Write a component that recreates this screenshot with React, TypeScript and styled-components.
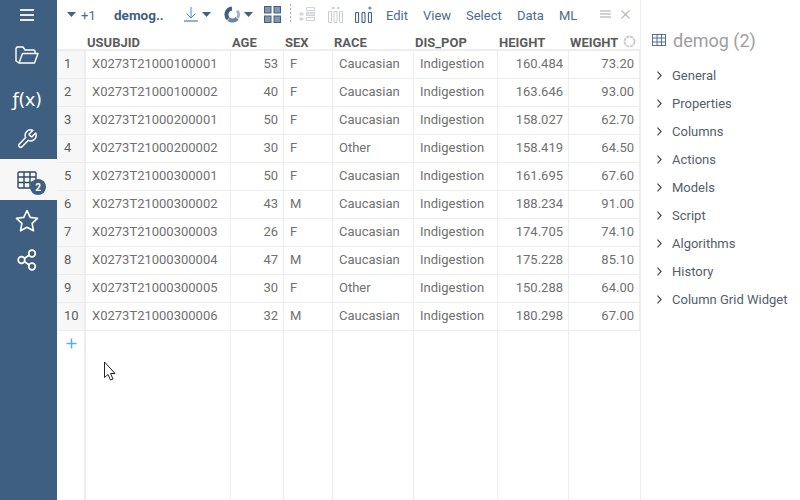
import React from 'react';
import styled, { createGlobalStyle } from 'styled-components';

const GlobalStyle = createGlobalStyle`
  html, body {
    margin: 0;
    padding: 0;
    background: #fff;
  }
  body {
    font-family: Roboto, "Liberation Sans", sans-serif;
  }
`;

const COLUMNS = '29px 145px 53px 49px 81px 84px 71px 71px';

const Page = styled.div`
  display: flex;
  width: 800px;
  height: 500px;
  overflow: hidden;
  position: relative;
`;

const Sidebar = styled.nav`
  width: 57px;
  flex: none;
  background: #3e5f80;
  display: flex;
  flex-direction: column;
`;

const SideItem = styled.div<{ $active?: boolean; $height?: number }>`
  height: ${(p) => p.$height ?? 40}px;
  display: flex;
  align-items: center;
  justify-content: center;
  padding-right: 3px;
  box-sizing: border-box;
  position: relative;
  color: ${(p) => (p.$active ? '#3e5f80' : '#fff')};
  background: ${(p) => (p.$active ? '#f7f7f7' : 'transparent')};
`;

const Badge = styled.span`
  position: absolute;
  left: 30px;
  top: 20px;
  width: 16px;
  height: 16px;
  border-radius: 50%;
  background: #3e5f80;
  color: #fff;
  font-size: 10px;
  font-weight: 700;
  display: flex;
  align-items: center;
  justify-content: center;
`;

const Fx = styled.span`
  font-family: "DejaVu Sans", sans-serif;
  font-size: 18px;
  letter-spacing: -0.5px;
  color: #fff;
`;

const Main = styled.main`
  width: 583px;
  flex: none;
  display: flex;
  flex-direction: column;
`;

const Toolbar = styled.div`
  height: 30px;
  position: relative;
  white-space: nowrap;
`;

const Tool = styled.span<{ $left: number; $bold?: boolean; $icon?: boolean }>`
  position: absolute;
  left: ${(p) => p.$left - 57}px;
  top: 0;
  height: ${(p) => (p.$icon ? 28 : 30)}px;
  display: flex;
  align-items: center;
  font-weight: ${(p) => (p.$bold ? 700 : 400)};
  font-size: ${(p) => (p.$bold ? '13.5px' : '13px')};
  color: ${(p) => (p.$bold ? '#40607f' : '#4b6c8c')};
`;

const Grid = styled.div`
  flex: 1;
  display: flex;
  flex-direction: column;
  min-height: 0;
`;

const Row = styled.div<{ $height?: number }>`
  display: grid;
  grid-template-columns: ${COLUMNS};
  height: ${(p) => p.$height ?? 28}px;
  flex: none;
`;

const HeadCell = styled.div`
  height: 21px;
  line-height: 25px;
  padding-left: 1px;
  font-size: 13px;
  font-weight: 700;
  color: #5c5c5c;
  border-bottom: 2px solid #ededed;
  box-sizing: border-box;
  position: relative;
  white-space: nowrap;
`;

const SortIcon = styled.svg`
  position: absolute;
  right: 4px;
  top: 5px;
`;

const IndexCell = styled.div`
  background: #f7f7f7;
  border-right: 2px solid #ededed;
  border-bottom: 1px solid #ededed;
  box-sizing: border-box;
  color: #5c5c5c;
  font-size: 13px;
  padding-left: 7px;
  line-height: 26px;
`;

const Cell = styled.div<{ $right?: boolean }>`
  border-right: 1px solid #ededed;
  border-bottom: 1px solid #ededed;
  box-sizing: border-box;
  color: #707070;
  font-size: 13px;
  line-height: 26px;
  padding: 0 5px 0 6px;
  text-align: ${(p) => (p.$right ? 'right' : 'left')};
  white-space: nowrap;
  overflow: hidden;
`;

const Filler = styled(Row)`
  flex: 1;
  height: auto;
`;

const FillerCell = styled.div<{ $bare?: boolean }>`
  border-right: ${(p) => (p.$bare ? 'none' : '1px solid #ededed')};
`;

const AddCell = styled.div`
  border-right: 2px solid #ededed;
  box-sizing: border-box;
  display: flex;
  align-items: flex-start;
  padding: 7px 0 0 9px;
`;

const Panel = styled.aside`
  flex: 1;
  border-left: 1px solid #ededed;
  padding: 21px 0 0 11px;
`;

const PanelTitle = styled.div`
  display: flex;
  align-items: center;
  gap: 7px;
  height: 38px;
  margin-bottom: 2px;
  font-size: 18px;
  color: #9e9e9e;
  font-weight: 400;
`;

const PanelRow = styled.div`
  height: 28px;
  display: flex;
  align-items: center;
  gap: 10px;
  padding-left: 5px;
  font-size: 13px;
  color: #555e69;
  white-space: nowrap;
`;

const Cursor = styled.svg`
  position: absolute;
  left: 103px;
  top: 361px;
`;

const rows = [
  ['X0273T21000100001', '53', 'F', 'Caucasian', 'Indigestion', '160.484', '73.20'],
  ['X0273T21000100002', '40', 'F', 'Caucasian', 'Indigestion', '163.646', '93.00'],
  ['X0273T21000200001', '50', 'F', 'Caucasian', 'Indigestion', '158.027', '62.70'],
  ['X0273T21000200002', '30', 'F', 'Other', 'Indigestion', '158.419', '64.50'],
  ['X0273T21000300001', '50', 'F', 'Caucasian', 'Indigestion', '161.695', '67.60'],
  ['X0273T21000300002', '43', 'M', 'Caucasian', 'Indigestion', '188.234', '91.00'],
  ['X0273T21000300003', '26', 'F', 'Caucasian', 'Indigestion', '174.705', '74.10'],
  ['X0273T21000300004', '47', 'M', 'Caucasian', 'Indigestion', '175.228', '85.10'],
  ['X0273T21000300005', '30', 'F', 'Other', 'Indigestion', '150.288', '64.00'],
  ['X0273T21000300006', '32', 'M', 'Caucasian', 'Indigestion', '180.298', '67.00'],
];

const headers = ['', 'USUBJID', 'AGE', 'SEX', 'RACE', 'DIS_POP', 'HEIGHT', 'WEIGHT'];
const rightAligned = [1, 5, 6];
const sections = ['General', 'Properties', 'Columns', 'Actions', 'Models', 'Script', 'Algorithms', 'History', 'Column Grid Widget'];

const Caret = () => (
  <svg width="9" height="5" viewBox="0 0 9 5">
    <path d="M0 0h9L4.500 5z" fill="#40607f" />
  </svg>
);

const App: React.FC = () => (
  <Page>
    <GlobalStyle />
    <Sidebar>
      <SideItem $height={30}>
        <svg width="16" height="14" viewBox="0 0 16 14" stroke="#e8edf2" strokeWidth="2">
          <path d="M1 2h14M1 7h14M1 12h14" />
        </svg>
      </SideItem>
      <SideItem $height={50}>
        <svg width="24" height="18" viewBox="0 0 24 18" fill="none" stroke="#fff" strokeWidth="1.4" strokeLinejoin="round">
          <path d="M4 17 1 15V2.500L2 1h6l2 3h9l1 1v2.500" />
          <path d="M4 17 7.500 7.500H23L19.500 17z" />
        </svg>
      </SideItem>
      <SideItem $height={39}>
        <Fx>ƒ(x)</Fx>
      </SideItem>
      <SideItem $height={40}>
        <svg width="22" height="22" viewBox="0 0 24 24" fill="none" stroke="#fff" strokeWidth="1.6" strokeLinejoin="round">
          <path d="M14.700 6.300a1 1 0 0 0 0 1.400l1.600 1.600a1 1 0 0 0 1.400 0l3.770-3.770a6 6 0 0 1-7.940 7.940l-6.910 6.910a2.120 2.120 0 0 1-3-3l6.910-6.910a6 6 0 0 1 7.940-7.940z" />
        </svg>
      </SideItem>
      <SideItem $active $height={41}>
        <svg width="20" height="18" viewBox="0 0 20 18" fill="none" stroke="#2e4a66" strokeWidth="1.4">
          <rect x="1" y="1" width="18" height="16" rx="1" />
          <path d="M1 6h18M1 11.500h18M7 1v16M13 1v16" />
        </svg>
        <Badge>2</Badge>
      </SideItem>
      <SideItem $height={40}>
        <svg width="24" height="23" viewBox="0 0 24 23" fill="none" stroke="#fff" strokeWidth="1.6" strokeLinejoin="round">
          <path d="m12 1.500 3.200 6.900 7.300.9-5.400 5.100 1.400 7.400L12 18.200l-6.500 3.600 1.400-7.400L1.500 9.300l7.300-.9z" />
        </svg>
      </SideItem>
      <SideItem $height={40}>
        <svg width="20" height="22" viewBox="0 0 20 22" fill="none" stroke="#fff" strokeWidth="1.7">
          <circle cx="4.500" cy="11" r="3.300" />
          <circle cx="15" cy="4.500" r="3.300" />
          <circle cx="15" cy="17.500" r="3.300" />
          <path d="m7.500 9.200 4.600-3M7.500 12.800l4.600 3" />
        </svg>
      </SideItem>
    </Sidebar>
    <Main>
      <Toolbar>
        <Tool $icon $left={67}><Caret /></Tool>
        <Tool $left={81}>+1</Tool>
        <Tool $left={114} $bold>demog..</Tool>
        <Tool $icon $left={184}>
          <svg width="14" height="16" viewBox="0 0 14 16" fill="none" stroke="#3f8fd0" strokeWidth="1">
            <path d="M7 1v11M2.500 7.500 7 12l4.500-4.500" />
            <path d="M0 15h14" stroke="#40607f" />
          </svg>
        </Tool>
        <Tool $icon $left={202}><Caret /></Tool>
        <Tool $icon $left={224}>
          <svg width="17" height="17" viewBox="0 0 17 17" fill="none" strokeWidth="4">
            <path d="M4.260 12.740A6 6 0 0 1 7.980 2.520" stroke="#40607f" />
            <path d="M13.100 12.360A6 6 0 0 1 4.640 13.100" stroke="#6a86a2" />
            <path d="M13.100 4.640A6 6 0 0 1 13.410 11.940" stroke="#a9b5c0" strokeWidth="3" />
          </svg>
        </Tool>
        <Tool $icon $left={244}><Caret /></Tool>
        <Tool $icon $left={264}>
          <svg width="17" height="17" viewBox="0 0 17 17" fill="#8496a9" stroke="#40607f" strokeWidth="1">
            <rect x="0.500" y="0.500" width="6.500" height="6.500" />
            <rect x="10" y="0.500" width="6.500" height="6.500" />
            <rect x="0.500" y="10" width="6.500" height="6.500" />
            <rect x="10" y="10" width="6.500" height="6.500" />
          </svg>
        </Tool>
        <Tool $icon $left={290}>
          <svg width="1" height="20" viewBox="0 0 1 20" stroke="#b0b0b0" strokeDasharray="2 2">
            <path d="M.5 0v20" />
          </svg>
        </Tool>
        <Tool $icon $left={299}>
          <svg width="17" height="15" viewBox="0 0 17 15" fill="none" stroke="#d0d4d8">
            <rect x="7.500" y="0.500" width="8" height="3" />
            <rect x="7.500" y="5.500" width="8" height="3" fill="#e3e6e9" />
            <rect x="7.500" y="10.500" width="8" height="3" />
            <path d="M1 6h3v2H1zM1 11h3v2H1z" fill="#d0d4d8" />
          </svg>
        </Tool>
        <Tool $icon $left={328}>
          <svg width="15" height="17" viewBox="0 0 15 17" fill="none" stroke="#c9ced3">
            <path d="M.5 5.500h3v11h-3zM6 5.500h3v11H6zM11.500 5.500h3v11h-3z" />
            <path d="M4 1h2.500v2H4zM9 1h2.500v2H9z" fill="#c9ced3" stroke="none" />
          </svg>
        </Tool>
        <Tool $icon $left={355}>
          <svg width="17" height="17" viewBox="0 0 17 17" fill="none" stroke="#2f5478" strokeWidth="1">
            <path d="M.6 6.600h3v9.800h-3zM7 6.600h3v9.800H7zM13.400 6.600h3v9.800h-3z" />
            <circle cx="14.900" cy="2" r="1.600" fill="#7c8fa3" stroke="none" />
          </svg>
        </Tool>
        <Tool $left={386}>Edit</Tool>
        <Tool $left={423}>View</Tool>
        <Tool $left={466}>Select</Tool>
        <Tool $left={517}>Data</Tool>
        <Tool $left={559}>ML</Tool>
        <Tool $icon $left={600}>
          <svg width="11" height="8" viewBox="0 0 11 8" stroke="#a8a8a8">
            <path d="M0 1h11M0 4h11M0 7h11" />
          </svg>
        </Tool>
        <Tool $icon $left={621}>
          <svg width="9" height="9" viewBox="0 0 9 9" stroke="#b5bcae" strokeWidth="1.100">
            <path d="m.5.500 8 8M8.500.500l-8 8" />
          </svg>
        </Tool>
      </Toolbar>
      <Grid>
        <Row $height={21}>
          {headers.map((h, i) => (
            <HeadCell key={i}>
              {h}
              {h === 'WEIGHT' && (
                <SortIcon width="13" height="13" viewBox="0 0 13 13" fill="none" stroke="#c9c9c9" strokeWidth="1.800">
                  <circle cx="6.500" cy="6.500" r="5" strokeDasharray="3.200 .73" />
                </SortIcon>
              )}
            </HeadCell>
          ))}
        </Row>
        {rows.map((r, i) => (
          <Row key={r[0]}>
            <IndexCell>{i + 1}</IndexCell>
            {r.map((v, j) => (
              <Cell key={j} $right={rightAligned.includes(j)}>{v}</Cell>
            ))}
          </Row>
        ))}
        <Filler>
          <AddCell>
            <svg width="11" height="11" viewBox="0 0 11 11" stroke="#5aaee0" strokeWidth="1.500">
              <path d="M5.500.5v10M.5 5.500h10" />
            </svg>
          </AddCell>
          {headers.slice(1).map((h, i) => (
            <FillerCell key={h} $bare={i === 6} />
          ))}
        </Filler>
      </Grid>
    </Main>
    <Panel>
      <PanelTitle>
        <svg width="14" height="12" viewBox="0 0 14 12" fill="none" stroke="#50708f">
          <rect x="0.500" y="0.500" width="13" height="11" />
          <path d="M.5 4h13M.5 8h13M5 .5v11M9.500.5v11" />
        </svg>
        demog (2)
      </PanelTitle>
      {sections.map((s) => (
        <PanelRow key={s}>
          <svg width="5" height="9" viewBox="0 0 5 9" fill="none" stroke="#444" strokeWidth="1.100">
            <path d="m.5.700 3.600 3.800L.5 8.300" />
          </svg>
          {s}
        </PanelRow>
      ))}
    </Panel>
    <Cursor width="14" height="20" viewBox="0 0 14 20" fill="#fff" stroke="#222" strokeWidth="1">
      <path d="M1.500 1v15.500l3.500-3 2.500 5.500 2.500-1-2.500-5.500h4.500z" />
    </Cursor>
  </Page>
);

export default App;
